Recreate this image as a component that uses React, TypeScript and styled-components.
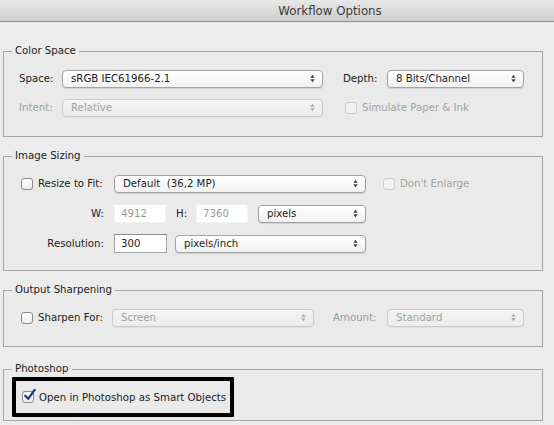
import styled, { createGlobalStyle } from 'styled-components';

const Global = createGlobalStyle`
  html, body {
    margin: 0;
    padding: 0;
    background: #ececec;
  }
  body {
    font-family: 'DejaVu Sans', 'Liberation Sans', sans-serif;
    font-size: 10.2px;
    color: #222;
  }
`;

export default function App() {
  return (
    <>
      <Global />
      <Window>
        <TitleBar>
          <Title>Workflow Options</Title>
        </TitleBar>

        <Body>
          <Group $pt={11} $pb={19}>
            <Legend>Color Space</Legend>
            <Row>
              <Label $w={43}>Space:</Label>
              <Select $w={261} value='sRGB IEC61966-2.1' />
              <Label $w={44} $ml={20}>Depth:</Label>
              <Select $w={137} value='8 Bits/Channel' />
            </Row>
            <Row $mt={10}>
              <Label $w={43} $dim>Intent:</Label>
              <Select $w={261} value='Relative' disabled />
              <CheckItem $ml={22} label='Simulate Paper & Ink' disabled />
            </Row>
          </Group>

          <Group $mt={12} $pt={11} $pb={17}>
            <Legend>Image Sizing</Legend>
            <Row>
              <Cell $w={95}>
                <CheckItem $ml={2} label='Resize to Fit:' />
              </Cell>
              <Select $w={252} value='Default  (36,2 MP)' />
              <CheckItem $ml={17} label="Don't Enlarge" disabled />
            </Row>
            <Row $mt={11}>
              <Label $w={95} $right>W:</Label>
              <Input $w={52} $disabled>4912</Input>
              <Label $w={20} $ml={10}>H:</Label>
              <Input $w={52} $disabled>7360</Input>
              <Select $w={108} $ml={10} value='pixels' />
            </Row>
            <Row $mt={11}>
              <Label $w={95} $right>Resolution:</Label>
              <Input $w={53}>300</Input>
              <Select $w={191} $ml={8} value='pixels/inch' />
            </Row>
          </Group>

          <Group $mt={12} $pt={11} $pb={19}>
            <Legend>Output Sharpening</Legend>
            <Row>
              <Cell $w={93}>
                <CheckItem $ml={2} label='Sharpen For:' />
              </Cell>
              <Select $w={202} value='Screen' disabled />
              <Label $w={54} $ml={19} $dim>Amount:</Label>
              <Select $w={137} value='Standard' disabled />
            </Row>
          </Group>

          <Group $mt={15} $pt={1} $pb={3}>
            <Legend>Photoshop</Legend>
            <Highlight>
              <CheckItem label='Open in Photoshop as Smart Objects' checked />
            </Highlight>
          </Group>
        </Body>
      </Window>
    </>
  );
}

function Select({ value, disabled, $w, $ml }: { value: string; disabled?: boolean; $w: number; $ml?: number }) {
  return (
    <SelectBox $w={$w} $ml={$ml} $disabled={disabled}>
      <span>{value}</span>
      <Arrows viewBox='0 0 6 10' $disabled={disabled}>
        <path d='M3 0.5 L5.6 4 L0.4 4 Z' />
        <path d='M3 9.5 L5.6 6 L0.4 6 Z' />
      </Arrows>
    </SelectBox>
  );
}

function CheckItem({ label, checked, disabled, $ml }: { label: string; checked?: boolean; disabled?: boolean; $ml?: number }) {
  return (
    <CheckWrap $ml={$ml} $disabled={disabled}>
      <Box $disabled={disabled}>
        {checked && (
          <CheckMark viewBox='0 0 14 14'>
            <path d='M2.5 7.2 L5.6 10.6 L12.6 0.8' />
          </CheckMark>
        )}
      </Box>
      <span>{label}</span>
    </CheckWrap>
  );
}

const Window = styled('div')`
  width: 554px;
  height: 425px;
  overflow: hidden;
  background: #ececec;
`;

const TitleBar = styled('div')`
  height: 21px;
  display: flex;
  align-items: center;
  justify-content: center;
  padding-left: 106px;
  background: linear-gradient(#e8e8e8, #cdcdcd);
  border-bottom: 1px solid #8e8e8e;
`;

const Title = styled('div')`
  font-size: 11.8px;
  color: #3b3b3b;
  padding-top: 1px;
`;

const Body = styled('div')`
  padding: 22px 11px 0 3px;
  display: flex;
  flex-direction: column;
`;

const Group = styled('fieldset')<{ $mt?: number; $pt: number; $pb: number }>`
  margin: ${(p) => p.$mt ?? 0}px 0 0 0;
  padding: ${(p) => p.$pt}px 0 ${(p) => p.$pb}px 15px;
  border: 1px solid #a6a6a6;
  background: #eaeaea;
  min-width: 0;
`;

const Legend = styled('legend')`
  margin-left: -7px;
  padding: 0 3px;
  line-height: 14px;
  color: #222;
`;

const Row = styled('div')<{ $mt?: number }>`
  display: flex;
  align-items: center;
  height: 19px;
  margin-top: ${(p) => p.$mt ?? 0}px;
`;

const Cell = styled('div')<{ $w: number }>`
  width: ${(p) => p.$w}px;
  flex-shrink: 0;
  display: flex;
  align-items: center;
`;

const Label = styled('span')<{ $w: number; $ml?: number; $dim?: boolean; $right?: boolean }>`
  width: ${(p) => p.$w}px;
  flex-shrink: 0;
  margin-left: ${(p) => p.$ml ?? 0}px;
  padding-right: ${(p) => (p.$right ? 10 : 0)}px;
  box-sizing: border-box;
  text-align: ${(p) => (p.$right ? 'right' : 'left')};
  color: ${(p) => (p.$dim ? '#9d9d9d' : '#222')};
  white-space: nowrap;
`;

const SelectBox = styled('div')<{ $w: number; $ml?: number; $disabled?: boolean }>`
  width: ${(p) => p.$w}px;
  height: 18px;
  margin-left: ${(p) => p.$ml ?? 0}px;
  box-sizing: border-box;
  flex-shrink: 0;
  display: flex;
  align-items: center;
  justify-content: space-between;
  padding: 0 7px 0 8px;
  border: 1px solid ${(p) => (p.$disabled ? '#cacaca' : '#a3a3a3')};
  border-radius: 4px;
  background: ${(p) => (p.$disabled ? 'linear-gradient(#f4f4f4, #ececec)' : 'linear-gradient(#ffffff, #f1f1f1)')};
  box-shadow: 0 1px 1px rgba(0, 0, 0, ${(p) => (p.$disabled ? 0.04 : 0.12)});
  color: ${(p) => (p.$disabled ? '#a2a2a2' : '#1e1e1e')};
  white-space: pre;
`;

const Arrows = styled('svg')<{ $disabled?: boolean }>`
  width: 5px;
  height: 9px;
  fill: ${(p) => (p.$disabled ? '#a9a9a9' : '#3c3c3c')};
`;

const Input = styled('div')<{ $w: number; $disabled?: boolean }>`
  width: ${(p) => p.$w}px;
  height: 19px;
  flex-shrink: 0;
  box-sizing: border-box;
  display: flex;
  align-items: center;
  padding-left: 6px;
  background: #fff;
  border: 1px solid ${(p) => (p.$disabled ? '#f2f2f2' : '#a6a6a6')};
  border-top-color: ${(p) => (p.$disabled ? '#ececec' : '#8c8c8c')};
  color: ${(p) => (p.$disabled ? '#9a9a9a' : '#1e1e1e')};
`;

const CheckWrap = styled('label')<{ $ml?: number; $disabled?: boolean }>`
  display: flex;
  align-items: center;
  gap: 5px;
  margin-left: ${(p) => p.$ml ?? 0}px;
  color: ${(p) => (p.$disabled ? '#a3a3a3' : '#222')};
  white-space: nowrap;
`;

const Box = styled('span')<{ $disabled?: boolean }>`
  position: relative;
  width: 12px;
  height: 12px;
  box-sizing: border-box;
  border: 1px solid ${(p) => (p.$disabled ? '#cdcdcd' : '#8a8a8a')};
  border-radius: 3px;
  background: ${(p) => (p.$disabled ? '#f1f1f1' : 'linear-gradient(#ffffff, #ececec)')};
`;

const CheckMark = styled('svg')`
  position: absolute;
  left: 0;
  top: -3px;
  width: 13px;
  height: 13px;
  fill: none;
  stroke: #1c3f86;
  stroke-width: 2.4;
  stroke-linecap: round;
  stroke-linejoin: round;
`;

const Highlight = styled('div')`
  width: 222px;
  height: 40px;
  box-sizing: border-box;
  margin-left: -7px;
  padding-left: 6px;
  display: flex;
  align-items: center;
  border: 4px solid #000;
  border-radius: 1px;
`;
